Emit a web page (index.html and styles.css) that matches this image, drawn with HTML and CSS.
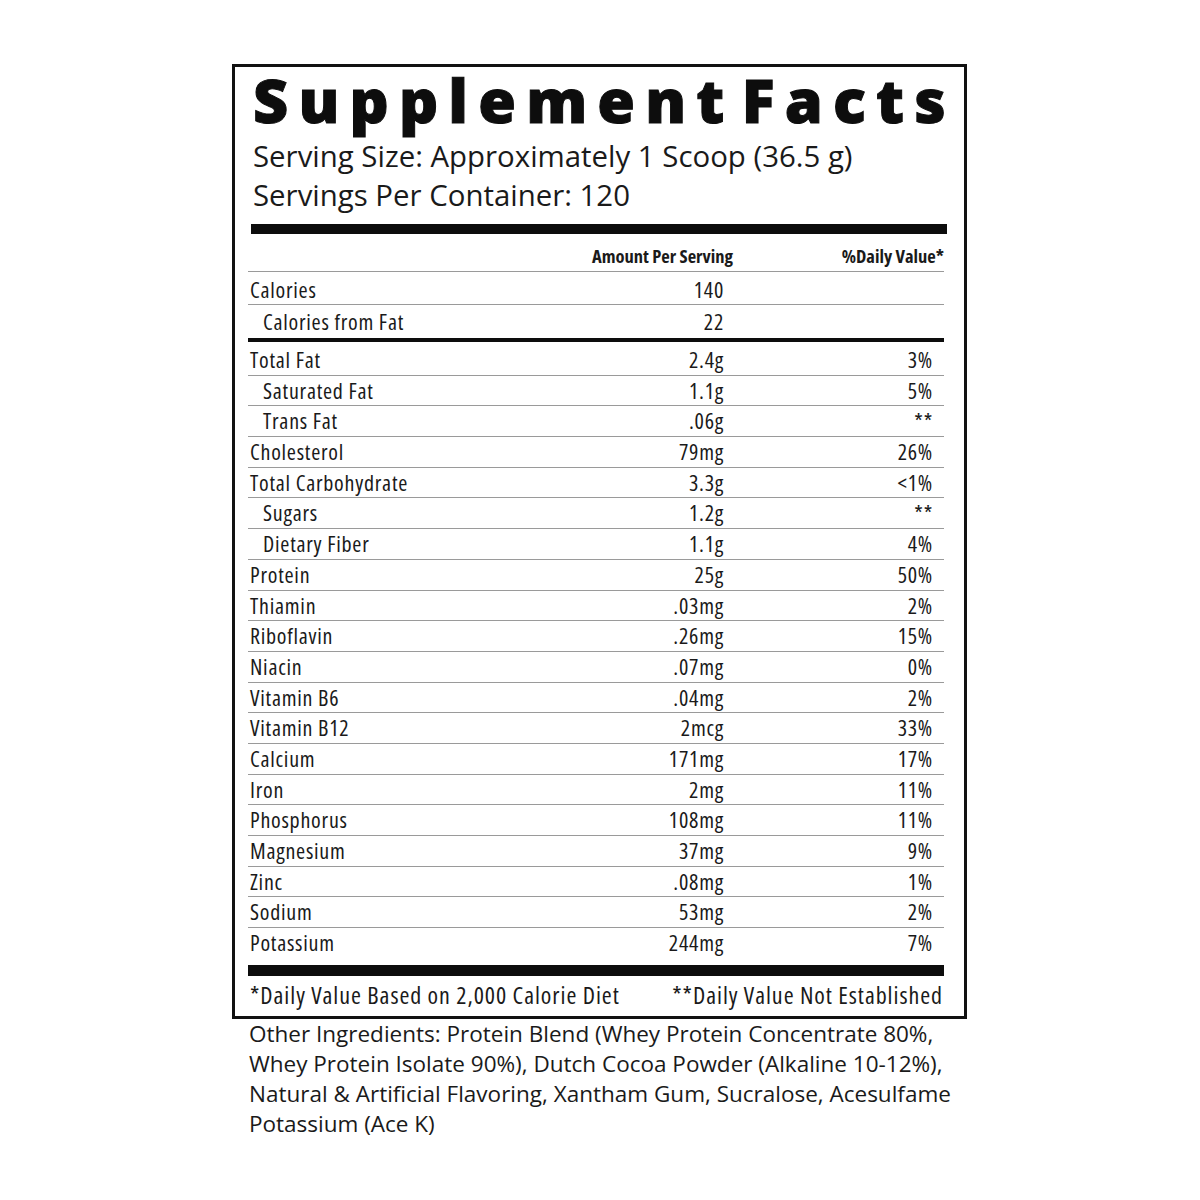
FILE: index.html
```html
<!DOCTYPE html>
<html lang="en">
<head>
<meta charset="utf-8">
<title>Supplement Facts</title>
<link rel="stylesheet" href="styles.css">
</head>
<body>
<div class="page">
  <section class="label">
    <h1 class="title">Supplement Facts</h1>
    <div class="serving">
      <div>Serving Size: Approximately 1 Scoop (36.5 g)</div>
      <div>Servings Per Container: 120</div>
    </div>
    <div class="bar bar-top"></div>
    <div class="head">
      <span></span>
      <span class="h-amt">Amount Per Serving</span>
      <span class="h-dv">%Daily Value*</span>
    </div>
    <div class="row row-cal"><span class="name">Calories</span><span class="amt">140</span><span class="dv"></span></div>
    <div class="row row-calfat"><span class="name sub">Calories from Fat</span><span class="amt">22</span><span class="dv"></span></div>
    <div class="bar bar-mid"></div>
    <div class="rows">
      <div class="row"><span class="name">Total Fat</span><span class="amt">2.4g</span><span class="dv">3%</span></div>
      <div class="row"><span class="name sub">Saturated Fat</span><span class="amt">1.1g</span><span class="dv">5%</span></div>
      <div class="row"><span class="name sub">Trans Fat</span><span class="amt">.06g</span><span class="dv">**</span></div>
      <div class="row"><span class="name">Cholesterol</span><span class="amt">79mg</span><span class="dv">26%</span></div>
      <div class="row"><span class="name">Total Carbohydrate</span><span class="amt">3.3g</span><span class="dv">&lt;1%</span></div>
      <div class="row"><span class="name sub">Sugars</span><span class="amt">1.2g</span><span class="dv">**</span></div>
      <div class="row"><span class="name sub">Dietary Fiber</span><span class="amt">1.1g</span><span class="dv">4%</span></div>
      <div class="row"><span class="name">Protein</span><span class="amt">25g</span><span class="dv">50%</span></div>
      <div class="row"><span class="name">Thiamin</span><span class="amt">.03mg</span><span class="dv">2%</span></div>
      <div class="row"><span class="name">Riboflavin</span><span class="amt">.26mg</span><span class="dv">15%</span></div>
      <div class="row"><span class="name">Niacin</span><span class="amt">.07mg</span><span class="dv">0%</span></div>
      <div class="row"><span class="name">Vitamin B6</span><span class="amt">.04mg</span><span class="dv">2%</span></div>
      <div class="row"><span class="name">Vitamin B12</span><span class="amt">2mcg</span><span class="dv">33%</span></div>
      <div class="row"><span class="name">Calcium</span><span class="amt">171mg</span><span class="dv">17%</span></div>
      <div class="row"><span class="name">Iron</span><span class="amt">2mg</span><span class="dv">11%</span></div>
      <div class="row"><span class="name">Phosphorus</span><span class="amt">108mg</span><span class="dv">11%</span></div>
      <div class="row"><span class="name">Magnesium</span><span class="amt">37mg</span><span class="dv">9%</span></div>
      <div class="row"><span class="name">Zinc</span><span class="amt">.08mg</span><span class="dv">1%</span></div>
      <div class="row"><span class="name">Sodium</span><span class="amt">53mg</span><span class="dv">2%</span></div>
      <div class="row last"><span class="name">Potassium</span><span class="amt">244mg</span><span class="dv">7%</span></div>
    </div>
    <div class="bar bar-bottom"></div>
    <div class="foot">
      <span>*Daily Value Based on 2,000 Calorie Diet</span>
      <span>**Daily Value Not Established</span>
    </div>
  </section>
  <p class="ingredients">Other Ingredients: Protein Blend (Whey Protein Concentrate 80%,<br>Whey Protein Isolate 90%), Dutch Cocoa Powder (Alkaline 10-12%),<br>Natural &amp; Artificial Flavoring, Xantham Gum, Sucralose, Acesulfame<br>Potassium (Ace K)</p>
</div>
</body>
</html>
```

FILE: styles.css
```css
html, body {
  margin: 0;
  padding: 0;
  background: #ffffff;
}

body {
  color: #111111;
  font-family: "Open Sans", "Liberation Sans", sans-serif;
}

.page {
  padding: 64px 0 0 232px;
}

.label {
  width: 735px;
  box-sizing: border-box;
  border: 3px solid #111111;
  padding: 3px 20px 0 13px;
}

.title {
  margin: 0 0 0 5px;
  font-family: "Open Sans", "Liberation Sans", sans-serif;
  font-weight: 800;
  font-size: 61px;
  line-height: 60px;
  letter-spacing: 10.2px;
  word-spacing: -19px;
  -webkit-text-stroke: 1px #0d0d0d;
  white-space: nowrap;
  color: #0d0d0d;
}

.serving {
  margin: 7px 0 0 5px;
  font-size: 29.4px;
  line-height: 38.5px;
  white-space: nowrap;
  color: #1a1a1a;
}

.bar {
  background: #0d0d0d;
}

.bar-top {
  height: 10px;
  margin: 10px -3px 0 3px;
}

.bar-mid {
  height: 4px;
}

.bar-bottom {
  height: 11px;
  margin-top: 6px;
}

.head,
.row,
.foot {
  font-family: "Open Sans", "DejaVu Sans Condensed", sans-serif;
  font-stretch: 75%;
  color: #1a1a1a;
}

.head,
.row {
  display: grid;
  grid-template-columns: 1fr 120px 220px;
}

.head {
  grid-template-columns: 1fr auto 211px;
  height: 38px;
  box-sizing: border-box;
  padding-top: 12px;
  border-bottom: 1px solid #9a9a9a;
  font-weight: 700;
  font-size: 18.5px;
  line-height: 20px;
}

.h-amt,
.h-dv {
  text-align: right;
  white-space: nowrap;
}

.row {
  font-size: 22px;
  letter-spacing: 0.75px;
  white-space: nowrap;
}

.name {
  padding-left: 2px;
}

.name.sub {
  padding-left: 15px;
}

.amt {
  text-align: right;
}

.dv {
  text-align: right;
  padding-right: 11px;
}

.row-cal {
  height: 33px;
  box-sizing: border-box;
  padding-top: 3px;
  line-height: 29px;
  border-bottom: 1px solid #9a9a9a;
}

.row-calfat {
  height: 33px;
  box-sizing: border-box;
  padding-top: 1px;
  line-height: 30px;
}

.rows {
  margin-top: 3px;
}

.rows .row {
  height: 30.7px;
  box-sizing: border-box;
  line-height: 29.7px;
  border-bottom: 1px solid #9a9a9a;
}

.rows .row.last {
  border-bottom: none;
}

.foot {
  display: flex;
  justify-content: space-between;
  height: 40px;
  box-sizing: border-box;
  padding: 0 1px 0 2px;
  font-size: 24px;
  letter-spacing: 0.95px;
  line-height: 38px;
  white-space: nowrap;
}

.ingredients {
  margin: 0 0 0 17px;
  font-size: 22.5px;
  line-height: 30px;
  white-space: nowrap;
  color: #1a1a1a;
}
```
